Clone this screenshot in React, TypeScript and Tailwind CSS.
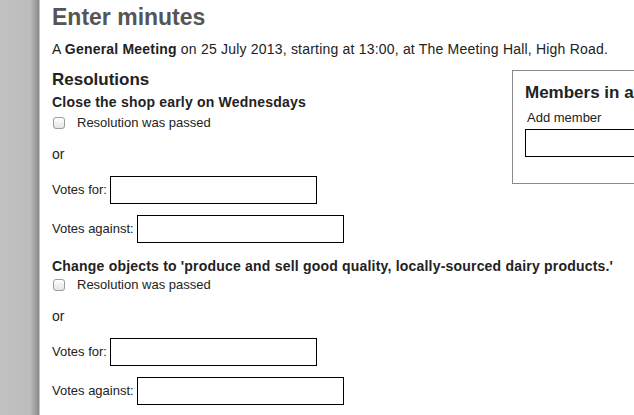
import React from "react";

const font = { fontFamily: "'Liberation Sans', Arial, Helvetica, sans-serif" };

function Checkbox() {
  return (
    <span className="ml-[1px] inline-block h-[12px] w-[12px] shrink-0 rounded-[3px] border border-[#9d9d9d] bg-[linear-gradient(to_bottom,#ffffff,#e4e4e4)] shadow-[inset_0_1px_0_#fff]" />
  );
}

function VoteRow({ label, className }: { label: string; className: string }) {
  return (
    <div className={`flex items-center gap-[3px] ${className}`}>
      <span className="text-[13px] leading-[16px] text-[#222]">{label}</span>
      <input className="h-[28px] w-[207px] border border-black bg-white outline-none" />
    </div>
  );
}

function Resolution({ title, first }: { title: string; first?: boolean }) {
  return (
    <div className={first ? "mt-[3px]" : "mt-[14px]"}>
      <h3 className="text-[14px] font-bold leading-[18px] tracking-[0.2px] text-[#222]">{title}</h3>
      <label className={`flex items-center gap-[12px] ${first ? "mt-[4px]" : "mt-[2px]"}`}>
        <Checkbox />
        <span className="text-[13px] leading-[16px] text-[#222]">Resolution was passed</span>
      </label>
      <p className="mt-[13px] text-[14px] leading-[20px] text-[#222]">or</p>
      <VoteRow label="Votes for:" className="mt-[12px]" />
      <VoteRow label="Votes against:" className="mt-[11px]" />
    </div>
  );
}

export default function App() {
  return (
    <div className="flex h-[415px] w-[634px] overflow-hidden bg-white" style={font}>
      {/* grey side strip with its shadow */}
      <div className="w-[40px] shrink-0 bg-[linear-gradient(to_right,#c1c1c1_0px,#bdbdbd_30px,#9b9b9b_36px,#8a8a8a_39px,#ffffff_40px)]" />

      <div className="w-[712px] shrink-0 pl-[12px] pt-[3px]">
        <h1 className="text-[23px] font-bold leading-[28px] text-[#555]">Enter minutes</h1>
        <p className="mt-[8px] pb-[11px] text-[14px] leading-[20px] tracking-[0.2px] text-[#222]">
          A <b>General Meeting</b> on 25 July 2013, starting at 13:00, at The Meeting Hall, High Road.
        </p>

        {/* members box */}
        <div className="float-right w-[240px] border border-[#8a8a8a] px-[12px] pb-[26px] pt-[12px]">
          <h2 className="whitespace-nowrap text-[17px] font-bold leading-[20px] text-[#222]">
            Members in attendance
          </h2>
          <p className="mt-[7px] pl-[2px] text-[13px] leading-[16px] text-[#222]">Add member</p>
          <input className="mt-[3px] h-[28px] w-[207px] border border-black bg-white outline-none" />
        </div>

        <h2 className="text-[17px] font-bold leading-[20px] text-[#222]">Resolutions</h2>
        <Resolution title="Close the shop early on Wednesdays" first />
        <Resolution title="Change objects to 'produce and sell good quality, locally-sourced dairy products.'" />
      </div>
    </div>
  );
}
